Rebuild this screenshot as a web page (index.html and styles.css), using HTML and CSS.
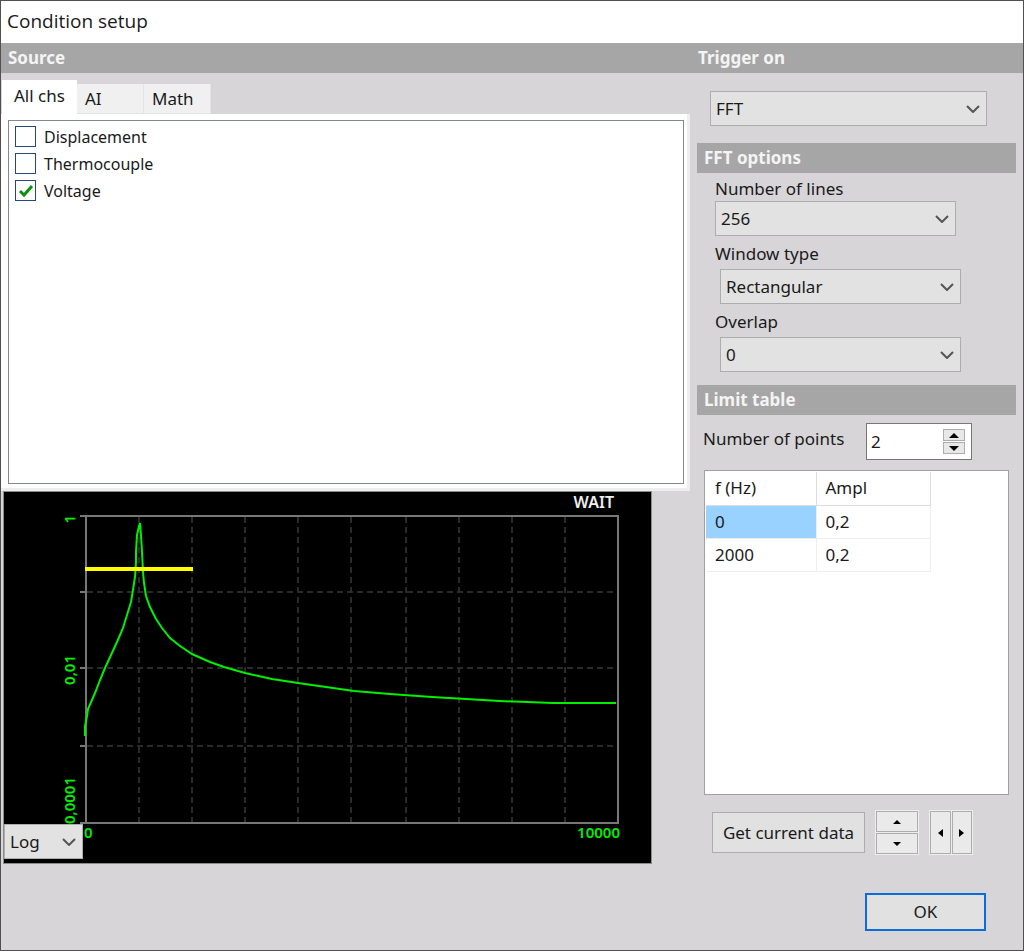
FILE: index.html
```
<!DOCTYPE html>
<html lang="en">
<head>
  <meta charset="UTF-8">
  <title>Condition setup</title>
  <link rel="stylesheet" href="styles.css">
</head>
<body>
  <div class="dialog">
    <h1 class="title">Condition setup</h1>
    <div class="columns">
      <div class="left">
        <h2 class="bar top">Source</h2>
        <div class="tabs">
          <button class="tab active">All chs</button>
          <button class="tab">AI</button>
          <button class="tab">Math</button>
        </div>
        <div class="panel">
          <div class="list">
            <label><input type="checkbox"><svg class="tick" viewBox="0 0 14 14"><path d="M1 7L5 11L13 2"/></svg>Displacement</label>
            <label><input type="checkbox"><svg class="tick" viewBox="0 0 14 14"><path d="M1 7L5 11L13 2"/></svg>Thermocouple</label>
            <label><input type="checkbox" checked><svg class="tick" viewBox="0 0 14 14"><path d="M1 7L5 11L13 2"/></svg>Voltage</label>
          </div>
        </div>
        <div class="chart">
          <svg class="plot" viewBox="0 0 647 371">
            <g class="grid">
              <path d="M135 25V331M188 25V331M241 25V331M294 25V331M347 25V331M402 25V331M455 25V331M508 25V331M561 25V331"/>
              <path d="M83 100H614M83 176H614M83 254H614"/>
            </g>
            <path class="axis" d="M76 24H614V331H76M82 24V331M76 100H82M76 176H82M76 254H82"/>
            <path class="curve" d="M81 244L81 234L83 224L84 217L91 201L96 188L101 176L107 163L113 150L119 136L123 123L127 110L129 98L131 85L132 70L132 60L133 43L135 34L136 31L137 43L138 60L139 80L140 91L142 104L146 115L152 127L158 136L166 146L176 154L188 162L206 170L220 175L241 181L268 187L294 191L336 197L350 199L386 202L428 205L496 209L549 211L612 211"/>
            <path class="limit" d="M81 77H189"/>
            <text class="status" x="610" y="16" text-anchor="end">WAIT</text>
            <text transform="translate(71 23) rotate(-90)" text-anchor="end">1</text>
            <text transform="translate(71 163) rotate(-90)" text-anchor="end">0,01</text>
            <text transform="translate(71 285) rotate(-90)" text-anchor="end">0,0001</text>
            <text x="80" y="346">0</text>
            <text x="616" y="346" text-anchor="end">10000</text>
          </svg>
          <div class="select scale">
            <select aria-label="Scale"><option>Log</option><option>Lin</option></select>
            <svg class="arrow" viewBox="0 0 14 8"><path d="M1 1L7 7L13 1"/></svg>
          </div>
        </div>
      </div>

      <div class="right">
        <h2 class="bar top">Trigger on</h2>
        <div class="select trigger">
          <select aria-label="Trigger on"><option>FFT</option></select>
          <svg class="arrow" viewBox="0 0 14 8"><path d="M1 1L7 7L13 1"/></svg>
        </div>

        <h2 class="bar">FFT options</h2>
        <div class="options">
          <label for="lines">Number of lines</label>
          <div class="select">
            <select id="lines"><option>256</option></select>
            <svg class="arrow" viewBox="0 0 14 8"><path d="M1 1L7 7L13 1"/></svg>
          </div>
          <label for="window">Window type</label>
          <div class="select indent">
            <select id="window"><option>Rectangular</option></select>
            <svg class="arrow" viewBox="0 0 14 8"><path d="M1 1L7 7L13 1"/></svg>
          </div>
          <label for="overlap">Overlap</label>
          <div class="select indent">
            <select id="overlap"><option>0</option></select>
            <svg class="arrow" viewBox="0 0 14 8"><path d="M1 1L7 7L13 1"/></svg>
          </div>
        </div>

        <h2 class="bar">Limit table</h2>
        <div class="points">
          <label for="points">Number of points</label>
          <div class="spin">
            <input id="points" type="text" value="2">
            <div class="spin-buttons">
              <button aria-label="More points"><svg viewBox="0 0 12 6"><path d="M0 6L6 0L12 6Z"/></svg></button>
              <button aria-label="Fewer points"><svg viewBox="0 0 12 6"><path d="M0 0L6 6L12 0Z"/></svg></button>
            </div>
          </div>
        </div>
        <div class="table-box">
          <table>
            <tr><th>f (Hz)</th><th>Ampl</th></tr>
            <tr><td class="selected">0</td><td>0,2</td></tr>
            <tr><td>2000</td><td>0,2</td></tr>
          </table>
        </div>
        <div class="actions">
          <button class="button">Get current data</button>
          <div class="arrows vertical">
            <button aria-label="Up"><svg width="8" height="4" viewBox="0 0 8 4"><path d="M0 4L4 0L8 4Z"/></svg></button>
            <button aria-label="Down"><svg width="8" height="4" viewBox="0 0 8 4"><path d="M0 0L4 4L8 0Z"/></svg></button>
          </div>
          <div class="arrows">
            <button aria-label="Left"><svg width="5" height="8" viewBox="0 0 5 8"><path d="M5 0L0 4L5 8Z"/></svg></button>
            <button aria-label="Right"><svg width="5" height="8" viewBox="0 0 5 8"><path d="M0 0L5 4L0 8Z"/></svg></button>
          </div>
        </div>
        <button class="button ok">OK</button>
      </div>
    </div>
  </div>
</body>
</html>
```
FILE: styles.css
```
* {
  box-sizing: border-box;
}

body {
  margin: 0;
  font-family: "Noto Sans", sans-serif;
  font-size: 17px;
  line-height: 24px;
  color: #1a1a1a;
}

button, input, select {
  font: inherit;
  color: inherit;
  margin: 0;
  padding: 0;
}

.dialog {
  min-height: 100vh;
  background: #d7d5d8;
  border: 1px solid #505050;
}

.title {
  margin: 0;
  padding: 0 6px 2px;
  background: #fff;
  font-family: "Open Sans", sans-serif;
  font-size: 19px;
  font-weight: normal;
  line-height: 40px;
}

.columns {
  display: flex;
}

.left {
  flex: 1;
  min-width: 0;
}

.right {
  width: 326px;
}

.bar {
  margin: 0 7px 0 0;
  padding-left: 7px;
  background: #a6a6a6;
  color: #f4f4f4;
  font-size: 17px;
  line-height: 30px;
}

.bar.top {
  margin: 0;
}

.right .bar.top {
  padding-left: 1px;
}

/* source list */
.tabs {
  display: flex;
  align-items: flex-end;
  height: 41px;
  padding-left: 1px;
}

.tab {
  width: 67px;
  height: 30px;
  padding-left: 8px;
  border: 1px solid #e4e4e4;
  border-width: 0 1px 1px 0;
  background: #f0f0f0;
  text-align: left;
}

.tab.active {
  width: 75px;
  height: 34px;
  padding: 0 0 2px 12px;
  background: #fff;
  border: 0;
}

.panel {
  margin-right: 7px;
  padding: 6px 3px 4px 7px;
  background: #fff;
  border-right: 3px solid #eee;
  border-bottom: 3px solid #eee;
}

.list {
  height: 364px;
  padding: 2px 6px;
  border: 1px solid #828790;
  font-size: 16px;
}

.list label {
  position: relative;
  display: flex;
  align-items: center;
  gap: 8px;
  height: 27px;
}

.list input {
  appearance: none;
  width: 21px;
  height: 21px;
  border: 1px solid #26477c;
  background: #fff;
}

.tick {
  position: absolute;
  left: 4px;
  width: 14px;
  height: 14px;
  fill: none;
  stroke: #0a930a;
  stroke-width: 3;
  visibility: hidden;
}

.list input:checked + .tick {
  visibility: visible;
}

/* spectrum */
.chart {
  position: relative;
  max-width: 649px;
  margin-left: 2px;
  border: 1px solid #8c8c8c;
  background: #000;
}

.plot {
  display: block;
  width: 100%;
}

.plot text {
  font-size: 15px;
  font-weight: 600;
  fill: #00f000;
}

.plot .status {
  font-size: 16px;
  fill: #eee;
}

.grid {
  fill: none;
  stroke: #2a2a2a;
  stroke-width: 2;
  stroke-dasharray: 6 4;
}

.axis {
  fill: none;
  stroke: #777;
  stroke-width: 2;
}

.curve {
  fill: none;
  stroke: #00f000;
  stroke-width: 2;
}

.limit {
  stroke: #ff0;
  stroke-width: 4;
}

.scale {
  position: absolute;
  left: 0;
  bottom: 4px;
  width: 79px;
}

/* drop-downs */
.select {
  height: 35px;
}

.select:not(.scale) {
  position: relative;
}

.select select {
  appearance: none;
  width: 100%;
  height: 100%;
  padding: 0 5px;
  border: 1px solid #adadad;
  border-radius: 0;
  background: #e2e2e2;
}

.arrow {
  position: absolute;
  right: 7px;
  top: 14px;
  width: 14px;
  height: 8px;
  fill: none;
  stroke: #555;
  stroke-width: 2;
  pointer-events: none;
}

.trigger {
  width: 277px;
  margin: 18px 0 17px 13px;
}

.options {
  display: flex;
  flex-direction: column;
  padding: 4px 0 13px 18px;
}

.options label {
  margin: 6px 0 3px;
}

.options label:first-child {
  margin: 0;
}

.options .select {
  width: 241px;
}

.options .indent {
  margin-left: 5px;
}

/* limit table */
.points {
  display: flex;
  justify-content: space-between;
  padding: 8px 51px 10px 6px;
}

.points label {
  padding-top: 4px;
}

.spin {
  display: flex;
  align-items: center;
  width: 106px;
  height: 37px;
  padding: 0 6px 0 4px;
  border: 1px solid #777;
  background: #fff;
}

.spin input {
  flex: 1;
  min-width: 0;
  border: 0;
  outline: 0;
}

.spin-buttons {
  width: 22px;
}

.spin-buttons button {
  display: flex;
  align-items: center;
  justify-content: center;
  width: 100%;
  height: 12px;
  border: 1px solid #adadad;
  background: #e8e8e8;
}

.spin-buttons button + button {
  margin-top: 1px;
}

.spin-buttons svg {
  width: 10px;
  height: 5px;
}

.table-box {
  height: 325px;
  margin: 0 14px 0 7px;
  padding: 1px;
  border: 1px solid #a0a0a0;
  background: #fff;
}

table {
  width: 225px;
  border-collapse: collapse;
  table-layout: fixed;
}

th, td {
  height: 33px;
  padding: 0 9px;
  border: 1px solid #eee;
  border-width: 0 1px 1px 0;
  font-weight: normal;
  text-align: left;
}

th {
  border-color: #ddd;
}

th:first-child {
  width: 110px;
}

.selected {
  background: #99d1ff;
}

.actions {
  display: flex;
  align-items: center;
  gap: 10px;
  margin: 15px 0 0 15px;
}

.button {
  width: 153px;
  height: 41px;
  border: 1px solid #adadad;
  background: #e1e1e1;
}

.arrows {
  display: flex;
  gap: 1px;
  width: 44px;
  height: 45px;
  padding: 1px;
  background: #eee;
}

.arrows.vertical {
  flex-direction: column;
}

.arrows button {
  display: flex;
  flex: 1;
  align-items: center;
  justify-content: center;
  border: 1px solid #adadad;
  background: #eaeaea;
}

.button.ok {
  display: block;
  width: 121px;
  height: 38px;
  margin: 38px 37px 19px auto;
  border: 2px solid #0a6cdd;
}
```
